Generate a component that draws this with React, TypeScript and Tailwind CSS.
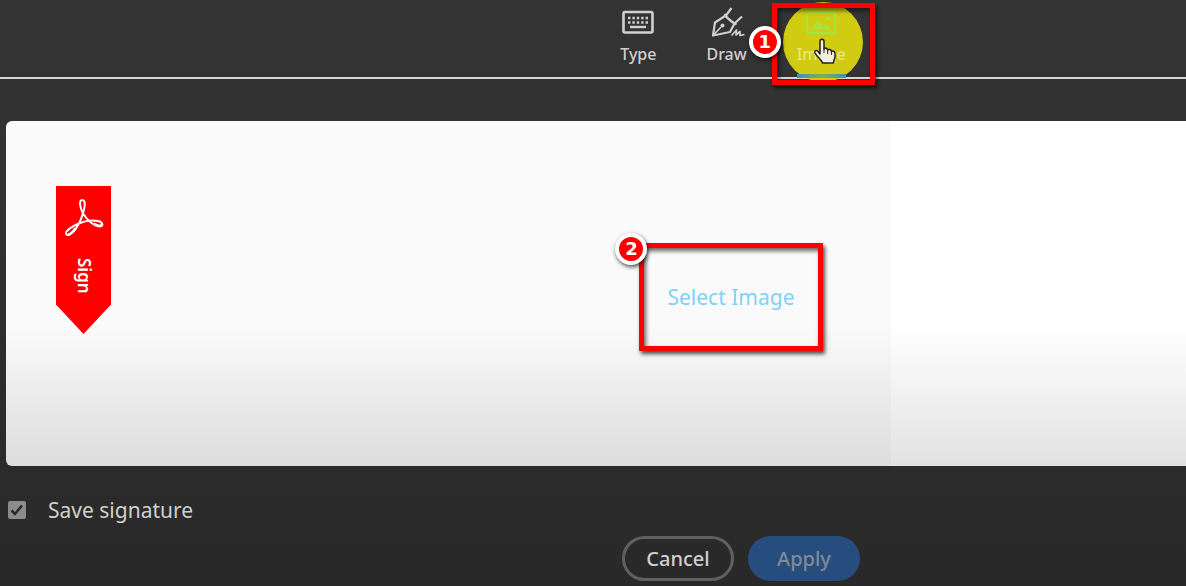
import { ReactNode, useState } from 'react';

function StepBadge({ step, className }: { step: number; className: string }) {
  return (
    <span
      className={`absolute flex h-8 w-8 items-center justify-center rounded-full border-4 border-white bg-[#fe0000] font-['DejaVu_Sans',sans-serif] text-lg font-bold leading-none text-white shadow-[1px_2px_4px_rgba(0,0,0,0.7)] ${className}`}
    >
      {step}
    </span>
  );
}

function TypeIcon() {
  return (
    <svg className="h-7 w-8" viewBox="0 0 32 28" fill="none" stroke="currentColor">
      <rect x="1.5" y="4" width="29" height="20.500" rx="1.5" strokeWidth="2.6" />
      <path d="M6 10h20M6 14.5h20" strokeWidth="2.4" strokeDasharray="2.4 2" />
      <path d="M8 19h16" strokeWidth="2.4" />
    </svg>
  );
}

function DrawIcon() {
  return (
    <svg className="h-8 w-9" viewBox="0 0 36 32" fill="none" stroke="currentColor" strokeWidth="2.2" strokeLinejoin="round">
      <path d="M4 29.500L6 16.500L16 10L25.500 17.500L21 26Z" />
      <path d="M17 9.500L22.500 2M26 17L33 10.500M15.500 8C18 12 22 16 27.500 18.500" />
      <path d="M5 28.500L12 21" strokeWidth="1.600" />
      <circle cx="13.500" cy="19.500" r="2" fill="currentColor" stroke="none" />
      <path d="M22.500 29.500L27.500 24L27 29L31 25.500L31 29.500L35.500 28.500" strokeWidth="1.700" />
    </svg>
  );
}

function ImageIcon() {
  return (
    <svg className="h-7 w-8" viewBox="0 0 32 28" fill="none" stroke="currentColor">
      <rect x="2" y="4.500" width="28" height="20.500" rx="1" strokeWidth="2.4" />
      <path d="M6 21.500L12.500 12.500L18 19L21 15.500L26 21.500Z" fill="currentColor" stroke="none" />
      <circle cx="23" cy="10.500" r="2" fill="currentColor" stroke="none" />
    </svg>
  );
}

function HandCursor() {
  return (
    <svg className="pointer-events-none absolute left-4 top-8 h-7 w-6" viewBox="0 0 24 28" fill="#f0eedc" stroke="#222" strokeWidth="1.500" strokeLinejoin="round">
      <path d="M7 16V3.500C7 .5 11 .5 11 3.500V11C12 9.500 14.500 10 14.700 12C16 10.800 18.300 11.500 18.400 13.200C20.500 12.300 22 13.500 22 15.500V19C22 21 20.500 22 20.500 25H9.500C9 22 4 19 2 15C1 12.500 4 11.500 5.500 14Z" />
      <path d="M11 10.500V15M14.700 12V16M18.400 13V17" strokeWidth="1" />
    </svg>
  );
}

function AcrobatMark() {
  return (
    <svg className="h-10 w-10" viewBox="0 0 40 40" fill="none" stroke="white" strokeWidth="2" strokeLinejoin="round">
      <path d="M18.500 2C14.500 1.500 16 10 19 15.500C23 22 30 28 35.500 28.500C40 28.500 39 24 34 23C28 22 21 23 16 25C9 28 2 31.500 2 35.500C3 39 8 36 11 32C16 25 19 17 20.500 9C21.200 4.500 20.500 2.200 18.500 2Z" />
      <path d="M30 25C33 27.500 37 28 38 26M4 36C6 36.500 9 33 11 30" strokeWidth="1.500" />
    </svg>
  );
}

function Tab({ label, icon, onClick, active }: { label: string; icon: ReactNode; onClick: () => void; active: boolean }) {
  return (
    <button
      type="button"
      aria-pressed={active}
      onClick={onClick}
      className="flex flex-col items-center gap-1 text-base font-medium leading-6"
    >
      <span className="flex h-8 items-center">{icon}</span>
      {label}
    </button>
  );
}

export default function App() {
  const [mode, setMode] = useState('image');
  const [save, setSave] = useState(true);

  return (
    <div className="min-h-screen overflow-hidden bg-linear-to-b from-[#343434] to-[#292929] font-['Noto_Sans','Open_Sans',sans-serif] text-[#d0d0d0]">
      <header className="flex justify-center gap-[50px] border-b-2 border-[#d6d6d6] pb-[11px] pl-[280px] pt-1.5">
        <Tab label="Type" icon={<TypeIcon />} active={mode === 'type'} onClick={() => setMode('type')} />
        <Tab label="Draw" icon={<DrawIcon />} active={mode === 'draw'} onClick={() => setMode('draw')} />
        <div className="relative">
          <span className="absolute -left-3.5 -top-1 h-20 w-20 rounded-full bg-[#d1cc12]" />
          <div className="relative text-[#e8e67c]">
            <Tab
              label="Image"
              icon={<span className="text-[#a4e43c]"><ImageIcon /></span>}
              active={mode === 'image'}
              onClick={() => setMode('image')}
            />
          </div>
          <span className="absolute inset-x-0 -bottom-3 h-1 bg-linear-to-r from-[#3f8fb4] via-[#7fae4a] to-[#3f8fb4]" />
          <HandCursor />
          <span className="pointer-events-none absolute -left-[25px] -top-[3px] h-[82px] w-[103px] border-5 border-[#fe0000] shadow-[2px_3px_4px_rgba(0,0,0,0.7),inset_2px_3px_4px_rgba(0,0,0,0.5)]" />
          <StepBadge step={1} className="-left-12 top-5" />
        </div>
      </header>

      <main className="pl-1.5 pt-[42px]">
        <section className="relative flex h-[345px] items-center rounded-l-md bg-linear-to-b from-white from-60% to-[#e2e2e2]">
          <div className="absolute inset-y-0 left-0 w-3/4 rounded-l-md bg-black/2" />
          <div className="relative ml-[50px] mt-[-67px] flex h-[148px] w-[55px] flex-col items-center gap-5 bg-[#fe0000] pt-3 text-white [clip-path:polygon(0_0,100%_0,100%_80%,50%_100%,0_80%)]">
            <AcrobatMark />
            <span className="text-[17px] font-semibold leading-6 [writing-mode:vertical-rl]">Sign</span>
          </div>
          <div className="flex flex-1 justify-center pl-[165px] pt-1.5">
            <div className="relative">
              <button type="button" className="px-7 py-[38px] text-[21px] leading-8 text-[#7fd2f7]">
                Select Image
              </button>
              <span className="pointer-events-none absolute inset-0 border-5 border-[#fe0000] shadow-[2px_3px_4px_rgba(0,0,0,0.7),inset_2px_3px_4px_rgba(0,0,0,0.6)]" />
              <StepBadge step={2} className="-left-6 -top-2.5" />
            </div>
          </div>
        </section>

        <label className="mt-7 flex w-fit items-center gap-[22px] pl-0.5 text-[21px] leading-8">
          <input type="checkbox" checked={save} onChange={(e) => setSave(e.target.checked)} className="peer sr-only" />
          <svg className="h-[18px] w-[18px] rounded-xs bg-[#8b8b8b] text-transparent peer-checked:text-[#292929]" viewBox="0 0 18 18" fill="none" stroke="currentColor" strokeWidth="2.500">
            <path d="M3.500 9.500L7 13L14 4.500" />
          </svg>
          Save signature
        </label>

        <footer className="mt-2.5 flex justify-center gap-3.5 pb-1 pl-[290px] text-xl">
          <button type="button" className="h-[45px] w-28 rounded-full border-3 border-[#606060] font-medium">Cancel</button>
          <button type="button" className="h-[45px] w-28 rounded-full bg-[#264d7e] font-medium text-[#7f8a99]">Apply</button>
        </footer>
      </main>
    </div>
  );
}
